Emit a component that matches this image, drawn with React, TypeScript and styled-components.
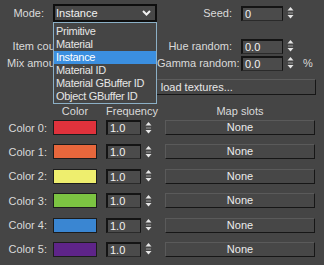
import * as React from "react";
import styled, { createGlobalStyle } from "styled-components";

const modes = [
  "Primitive",
  "Material",
  "Instance",
  "Material ID",
  "Material GBuffer ID",
  "Object GBuffer ID"
];

const colors = ["#e0323c", "#e8673c", "#eeee6e", "#7cc442", "#3a86d2", "#5e2489"];

const GlobalStyle = createGlobalStyle`
  body {
    margin: 0;
    background: #454545;
    font-family: "Liberation Sans", Arial, sans-serif;
    font-size: 11px;
    color: #dadada;
  }
`;

function Arrows() {
  return (
    <ArrowBox>
      <svg width="7" height="16" viewBox="0 0 7 16">
        <polygon points="0.5,5.5 3.5,2 6.5,5.5" fill="#e6e6e6" />
        <rect x="1" y="7.5" width="5" height="1" fill="#9a9a9a" />
        <polygon points="0.5,10 3.5,13.5 6.5,10" fill="#e6e6e6" />
      </svg>
    </ArrowBox>
  );
}

function Spinner({ value, width }: { value: string; width: number }) {
  return (
    <SpinnerWrap>
      <SpinField $width={width}>{value}</SpinField>
      <Arrows />
    </SpinnerWrap>
  );
}

export default function App() {
  return (
    <>
      <GlobalStyle />
      <Panel>
        <Row $height={18}>
          <LeftBlock>
            <ModeLabel>Mode:</ModeLabel>
            <Select>
              <span>Instance</span>
              <svg width="9" height="6" viewBox="0 0 9 6">
                <polyline
                  points="1,1 4.5,4.5 8,1"
                  fill="none"
                  stroke="#f0f0f0"
                  strokeWidth="2"
                />
              </svg>
            </Select>
          </LeftBlock>
          <RightLabel>Seed:</RightLabel>
          <Spinner value="0" width={42} />
        </Row>

        <Row $height={16} $top={16}>
          <LeftBlock>
            <CountLabel>Item count:</CountLabel>
          </LeftBlock>
          <RightLabel>Hue random:</RightLabel>
          <Spinner value="0.0" width={42} />
        </Row>

        <Row $height={16} $top={1}>
          <LeftBlock>
            <CountLabel>Mix amount:</CountLabel>
          </LeftBlock>
          <RightLabel>Gamma random:</RightLabel>
          <Spinner value="0.0" width={42} />
          <Percent>%</Percent>
        </Row>

        <LoadButton>{"Auto\u00a0\u00a0load textures..."}</LoadButton>

        <HeaderRow>
          <HeadCell $width={44} $left={53}>Color</HeadCell>
          <HeadCell $width={52} $left={9}>Frequency</HeadCell>
          <HeadCell $width={150} $left={7}>Map slots</HeadCell>
        </HeaderRow>

        <Table>
          {colors.map((c, i) => (
            <React.Fragment key={i}>
              <ColorLabel>Color {i}:</ColorLabel>
              <Swatch $color={c} />
              <Spinner value="1.0" width={35} />
              <SlotButton>None</SlotButton>
            </React.Fragment>
          ))}
        </Table>

        <Dropdown>
          {modes.map(m => (
            <DropItem key={m} $active={m === "Instance"}>
              {m}
            </DropItem>
          ))}
        </Dropdown>
      </Panel>
    </>
  );
}

const Panel = styled.div`
  position: relative;
  width: 324px;
  height: 265px;
  padding-top: 4px;
  box-sizing: border-box;
  overflow: hidden;
  display: flex;
  flex-direction: column;
`;

const Row = styled.div<{ $height: number; $top?: number }>`
  display: flex;
  align-items: center;
  height: ${p => p.$height}px;
  margin-top: ${p => p.$top ?? 0}px;
`;

const LeftBlock = styled.div`
  width: 157px;
  display: flex;
  align-items: center;
  height: 100%;
`;

const ModeLabel = styled.span`
  width: 44px;
  text-align: right;
  margin-right: 9px;
`;

const CountLabel = styled.span`
  width: 67px;
  text-align: right;
  white-space: nowrap;
`;

const Select = styled.div`
  width: 104px;
  height: 18px;
  box-sizing: border-box;
  border: 2px solid #0e0e0e;
  background: #474747;
  color: #f2f2f2;
  padding: 0 4px 0 1px;
  display: flex;
  align-items: center;
  justify-content: space-between;
`;

const RightLabel = styled.span`
  width: 75px;
  text-align: right;
  margin-right: 9px;
  white-space: nowrap;
`;

const SpinnerWrap = styled.div`
  display: flex;
  align-items: center;
  gap: 4px;
`;

const SpinField = styled.div<{ $width: number }>`
  width: ${p => p.$width}px;
  height: 15px;
  box-sizing: border-box;
  background: #4b4b4b;
  border: 1px solid #141414;
  border-top-width: 2px;
  border-left-width: 2px;
  border-bottom-color: #2a2a2a;
  color: #f2f2f2;
  padding-left: 2px;
  line-height: 12px;
`;

const ArrowBox = styled.div`
  width: 7px;
  height: 16px;
  display: flex;
`;

const Percent = styled.span`
  margin-left: 9px;
`;

const LoadButton = styled.div`
  margin: 8px 8px 0 60px;
  height: 16px;
  box-sizing: border-box;
  border: 1px solid #161616;
  border-top-color: #5c5c5c;
  border-left-color: #5c5c5c;
  background: #464646;
  color: #e8e8e8;
  padding-left: 71px;
  white-space: nowrap;
  line-height: 14px;
`;

const HeaderRow = styled.div`
  display: flex;
  height: 14px;
  line-height: 14px;
  margin-top: 9px;
`;

const HeadCell = styled.span<{ $width: number; $left: number }>`
  width: ${p => p.$width}px;
  margin-left: ${p => p.$left}px;
  text-align: center;
  white-space: nowrap;
`;

const Table = styled.div`
  margin-top: 2px;
  display: grid;
  grid-template-columns: 53px 53px 59px 150px;
  grid-auto-rows: 15px;
  row-gap: 9.4px;
  align-items: center;
`;

const ColorLabel = styled.span`
  text-align: right;
  padding-right: 6px;
  white-space: nowrap;
`;

const Swatch = styled.div<{ $color: string }>`
  width: 44px;
  height: 15px;
  box-sizing: border-box;
  background: ${p => p.$color};
  border: 1px solid #1c1c1c;
`;

const SlotButton = styled.div`
  width: 150px;
  height: 15px;
  box-sizing: border-box;
  border: 1px solid #161616;
  border-top-color: #5a5a5a;
  border-left-color: #5a5a5a;
  background: #474747;
  color: #ececec;
  text-align: center;
  line-height: 13px;
`;

const Dropdown = styled.div`
  position: absolute;
  left: 53px;
  top: 22px;
  width: 104px;
  box-sizing: border-box;
  border: 1px solid #8cb0c6;
  background: #454545;
  padding: 2px 0 0;
`;

const DropItem = styled.div<{ $active: boolean }>`
  height: 13px;
  line-height: 13px;
  padding-left: 2px;
  white-space: nowrap;
  letter-spacing: -0.3px;
  color: ${p => (p.$active ? "#ffffff" : "#e6e6e6")};
  background: ${p => (p.$active ? "#3b8fe0" : "transparent")};
`;
